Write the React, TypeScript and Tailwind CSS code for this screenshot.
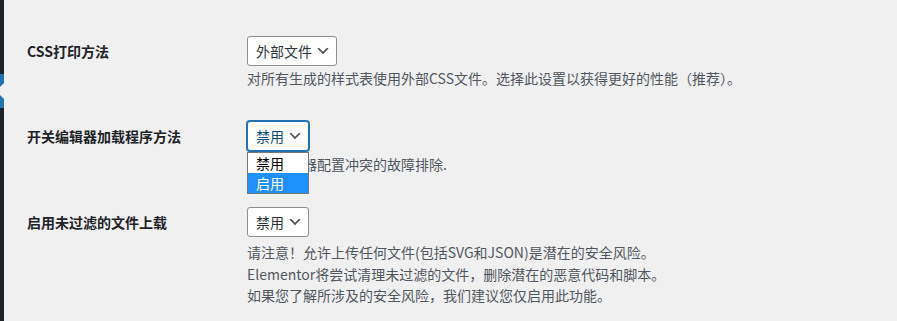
import React from "react";

function Chevron() {
  return (
    <svg viewBox="0 0 20 20" className="ml-[3px] h-4 w-4 shrink-0">
      <path d="M5 6l5 5 5-5 2 1-7 7-7-7 2-1z" fill="#555" />
    </svg>
  );
}

function FakeSelect({ value, focused = false }: { value: string; focused?: boolean }) {
  return (
    <div
      className={
        focused
          ? "inline-flex h-[30px] items-center rounded-[3px] border border-[#2271b1] bg-white pl-[8px] pr-[5px] text-[14px] text-[#0a4b78] shadow-[0_0_0_1px_#2271b1]"
          : "inline-flex h-[30px] items-center rounded-[3px] border border-[#8c8f94] bg-white pl-[8px] pr-[5px] text-[14px] text-[#2c3338]"
      }
    >
      <span className="leading-[28px]">{value}</span>
      <Chevron />
    </div>
  );
}

function Row({
  label,
  children,
  className = "",
}: {
  label: string;
  children: React.ReactNode;
  className?: string;
}) {
  return (
    <div className={"flex " + className}>
      <div className="w-[220px] shrink-0 text-[14px] font-semibold leading-[30px] text-[#1d2327]">
        {label}
      </div>
      <div className="flex-1">{children}</div>
    </div>
  );
}

export default function App() {
  return (
    <div className="flex h-[321px] w-[897px] overflow-hidden bg-[#f0f0f1] font-['Noto_Sans_CJK_SC',sans-serif]">
      <div className="flex w-[4px] shrink-0 flex-col bg-[#1d2327]">
        <div className="h-[74px]" />
        <div className="relative h-[34px] bg-[#2271b1]">
          <svg viewBox="0 0 4 16" className="absolute left-0 top-[9px] h-[16px] w-[4px]">
            <polygon points="4,0 4,16 0,12 0,4" fill="#f0f0f1" />
          </svg>
        </div>
      </div>

      <div className="flex-1 pl-[23px] pt-[36px]">
        <Row label="CSS打印方法">
          <FakeSelect value="外部文件" />
          <p className="mt-[2px] text-[14px] leading-[21px] text-[#50575e]">
            对所有生成的样式表使用外部CSS文件。选择此设置以获得更好的性能（推荐）。
          </p>
        </Row>

        <Row label="开关编辑器加载程序方法" className="mt-[32px]">
          <div className="relative z-10 inline-block">
            <FakeSelect value="禁用" focused />
            <div className="absolute left-0 top-[31px] w-[62px] border border-[#767676] bg-white text-[14px]">
              <div className="h-[20px] pl-[8px] leading-[20px] text-black">禁用</div>
              <div className="h-[20px] bg-[#1e90ff] pl-[8px] leading-[20px] text-white">启用</div>
            </div>
          </div>
          <p className="mt-[3px] text-[14px] leading-[21px] text-[#50575e]">
            用于服务器配置冲突的故障排除.
          </p>
        </Row>

        <Row label="启用未过滤的文件上载" className="mt-[32px]">
          <FakeSelect value="禁用" />
          <div className="mt-[5px] text-[14px] leading-[21.7px] text-[#50575e]">
            <p>请注意！允许上传任何文件(包括SVG和JSON)是潜在的安全风险。</p>
            <p>Elementor将尝试清理未过滤的文件，删除潜在的恶意代码和脚本。</p>
            <p>如果您了解所涉及的安全风险，我们建议您仅启用此功能。</p>
          </div>
        </Row>
      </div>
    </div>
  );
}
